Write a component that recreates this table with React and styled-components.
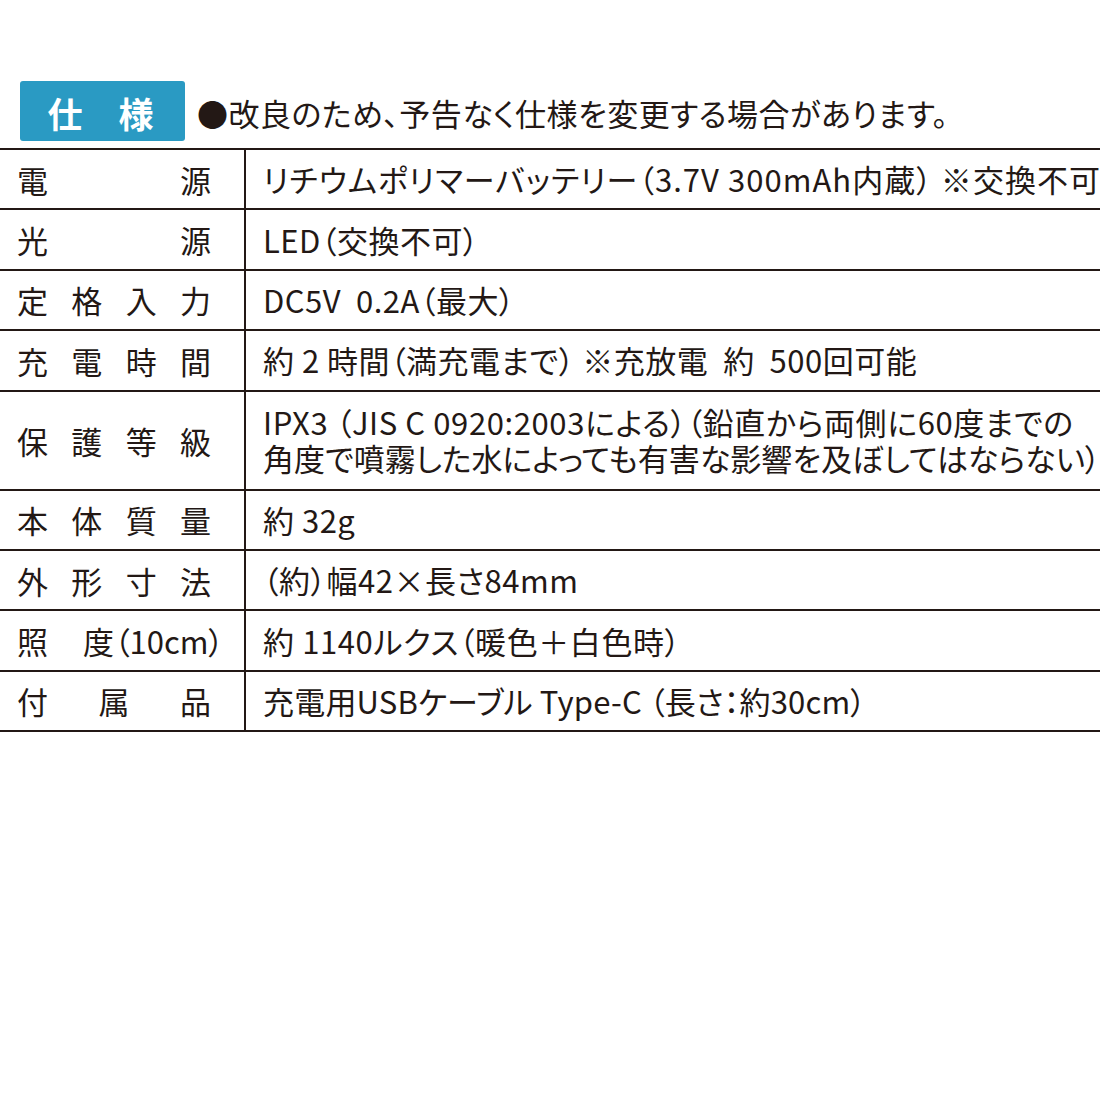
import React from 'react';
import styled, { createGlobalStyle } from 'styled-components';

const GlobalStyle = createGlobalStyle`
  html, body {
    margin: 0;
    padding: 0;
    background: #fff;
    overflow: hidden;
  }
  body {
    font-family: "Noto Sans CJK JP", "Noto Sans", sans-serif;
    color: #231815;
  }
`;

// track = letter-spacing per line, to match the print font's widths
const specs = [
  { label: ['電', '源'], value: [['リチウムポリマーバッテリー（3.7V 300mAh内蔵） ※交換不可', 1.05]] },
  { label: ['光', '源'], value: [['LED（交換不可）', 0.5]] },
  { label: ['定', '格', '入', '力'], value: [['DC5V  0.2A（最大）', 0.5]] },
  { label: ['充', '電', '時', '間'], value: [['約 2 時間（満充電まで） ※充放電  約  500回可能', 0.5]] },
  {
    label: ['保', '護', '等', '級'],
    value: [
      ['IPX3 （JIS C 0920:2003による）（鉛直から両側に60度までの', 0.6],
      ['角度で噴霧した水によっても有害な影響を及ぼしてはならない）', 0],
    ],
    tall: true,
  },
  { label: ['本', '体', '質', '量'], value: [['約 32g', 0.5]] },
  { label: ['外', '形', '寸', '法'], value: [['（約）幅42×長さ84mm', 0.5]] },
  { label: ['照', '度（10cm）'], value: [['約 1140ルクス（暖色＋白色時）', 0.6]], wide: true },
  { label: ['付', '属', '品'], value: [['充電用USBケーブル Type-C （長さ：約30cm）', 0.2]] },
];

const Page = styled.div`
  width: 1100px;
  height: 1100px;
  padding-top: 81px;
  box-sizing: border-box;
`;

const Header = styled.div`
  display: flex;
  align-items: center;
  padding-left: 20px;
  gap: 12px;
  margin-bottom: 7px;
`;

const Badge = styled.div`
  width: 165px;
  height: 60px;
  background: #2a9ac3;
  border-radius: 3px;
  color: #fff;
  font-size: 35px;
  font-weight: 700;
  display: flex;
  align-items: center;
  justify-content: center;
  gap: 36px;
  padding: 2px 4px 0 0;
  box-sizing: border-box;
`;

const Note = styled.div`
  font-size: 31px;
  line-height: 1;
  white-space: nowrap;
  letter-spacing: 0.5px;
  font-feature-settings: "palt";
  margin-top: 2px;
`;

const Table = styled.div`
  display: grid;
  grid-template-columns: 246px 1fr;
  border-top: 2px solid #231815;
`;

const Label = styled.div`
  height: ${(p) => (p.$tall ? 97 : 58.4)}px;
  border-right: 2px solid #231815;
  border-bottom: 2px solid #231815;
  display: flex;
  align-items: center;
  justify-content: space-between;
  padding: 0 ${(p) => (p.$wide ? 20 : 33)}px 0 17px;
  font-size: 31px;
  line-height: 1;
  font-feature-settings: "palt";
  white-space: nowrap;
`;

const Value = styled.div`
  height: ${(p) => (p.$tall ? 97 : 58.4)}px;
  border-bottom: 2px solid #231815;
  display: flex;
  flex-direction: column;
  justify-content: center;
  padding-left: 17px;
  font-size: 31px;
  line-height: 36px;
  white-space: pre;
  font-feature-settings: "palt";
  overflow: hidden;
`;

const Line = styled.span`
  letter-spacing: ${(p) => p.$track}px;
`;

export default function App() {
  return (
    <>
      <GlobalStyle />
      <Page>
        <Header>
          <Badge>
            <span>仕</span>
            <span>様</span>
          </Badge>
          <Note>●改良のため、予告なく仕様を変更する場合があります。</Note>
        </Header>
        <Table>
          {specs.map((row, i) => (
            <React.Fragment key={i}>
              <Label $tall={row.tall} $wide={row.wide}>
                {row.label.map((c, j) => (
                  <span key={j}>{c}</span>
                ))}
              </Label>
              <Value $tall={row.tall}>
                {row.value.map(([text, track], j) => (
                  <Line key={j} $track={track}>
                    {text}
                  </Line>
                ))}
              </Value>
            </React.Fragment>
          ))}
        </Table>
      </Page>
    </>
  );
}
